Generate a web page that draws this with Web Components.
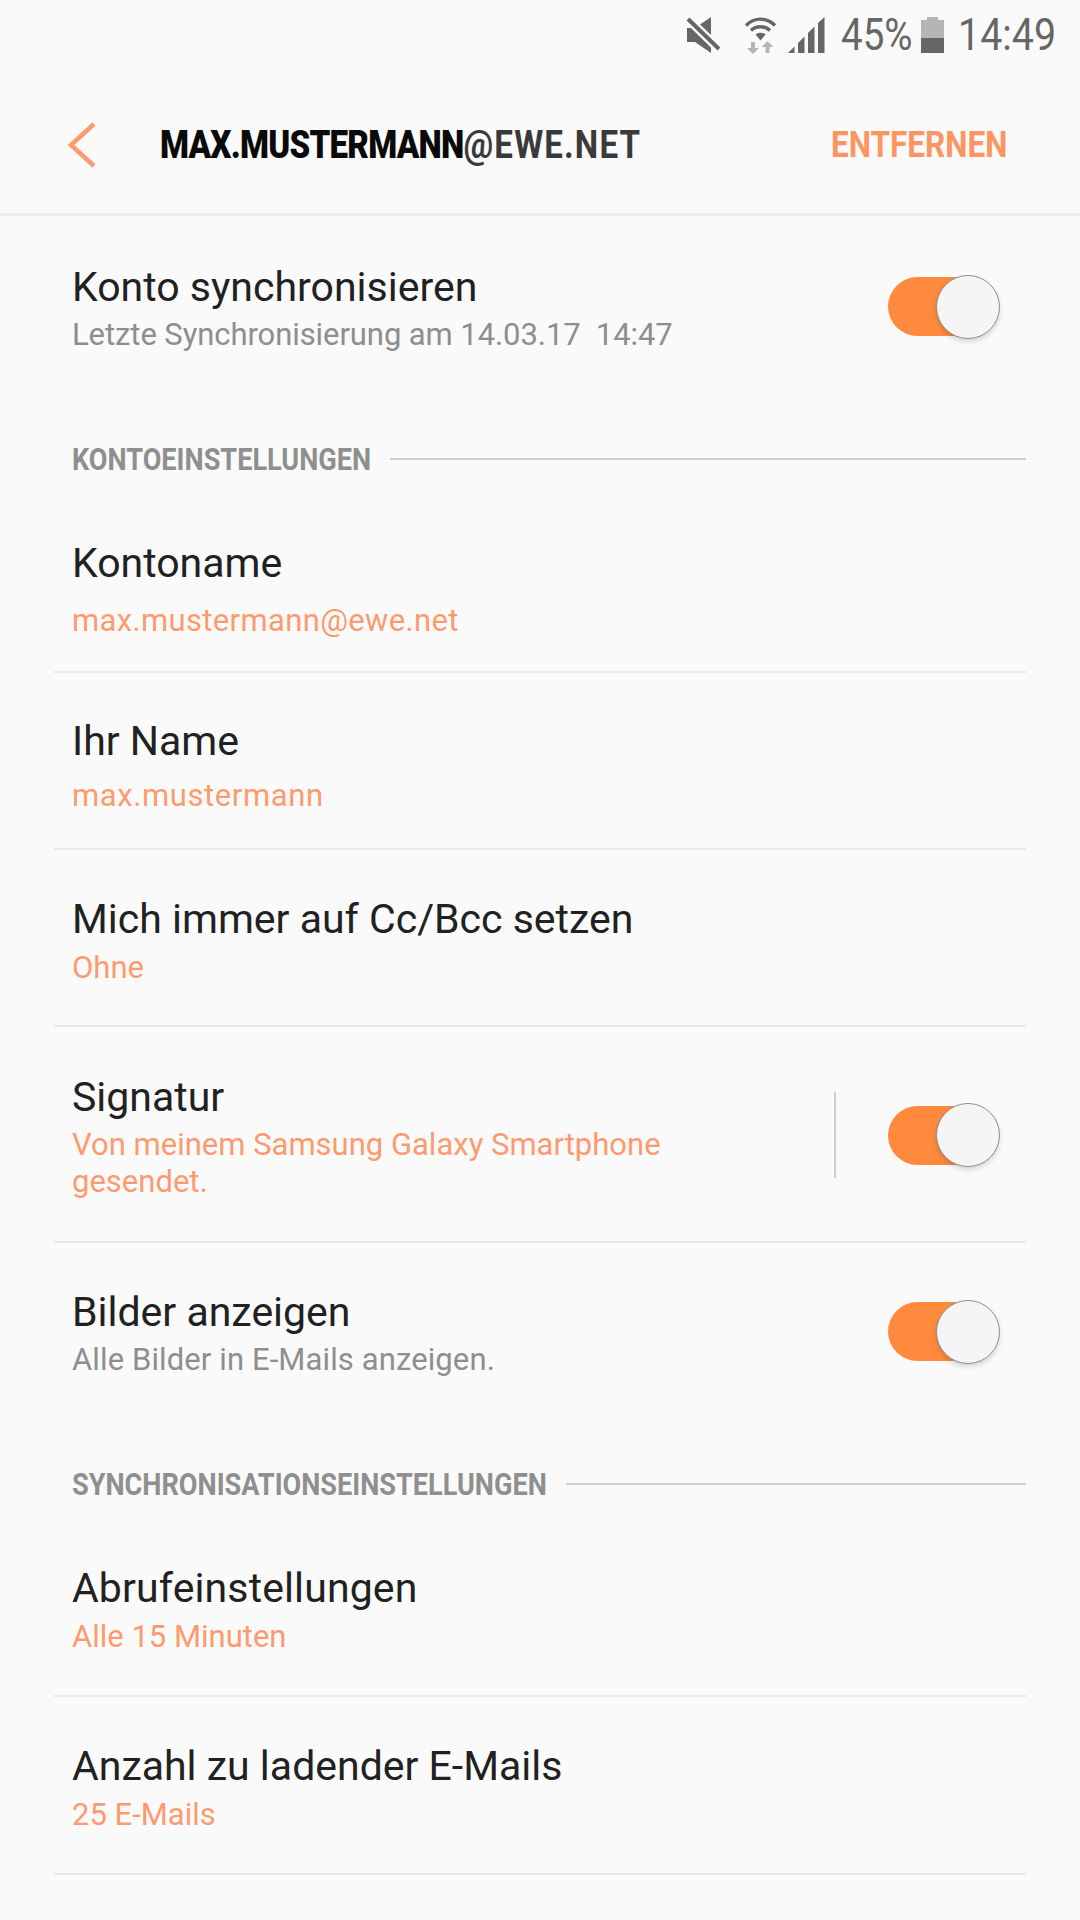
<!DOCTYPE html>
<html lang="de">
<head>
<meta charset="utf-8">
<title>Konto</title>
<style>
  html, body { margin: 0; padding: 0; background: #fafafa; }
  body { width: 1080px; height: 1920px; overflow: hidden; font-family: Roboto, sans-serif; }
</style>
</head>
<body>
<status-bar></status-bar>
<account-header action="ENTFERNEN"><b>MAX.MUSTERMANN</b><i>@EWE.NET</i></account-header>
<settings-list>
  <setting-row top="48" gap="6" toggle style="--sub-color:#8e8e8e;--sub-ls:-.08px">
    <span slot="title">Konto synchronisieren</span>
    Letzte Synchronisierung am 14.03.17&nbsp; 14:47
  </setting-row>
  <section-head style="--head-top:48px">KONTOEINSTELLUNGEN</section-head>
  <setting-row top="64" gap="16" bottom="32" style="--sub-ls:.35px" divider>
    <span slot="title">Kontoname</span>
    max.mustermann@ewe.net
  </setting-row>
  <setting-row top="45" gap="13" bottom="34" style="--sub-ls:.6px" divider>
    <span slot="title">Ihr Name</span>
    max.mustermann
  </setting-row>
  <setting-row top="46" gap="7" bottom="39" divider>
    <span slot="title">Mich immer auf Cc/Bcc setzen</span>
    Ohne
  </setting-row>
  <setting-row top="47" gap="6" divider toggle separator>
    <span slot="title">Signatur</span>
    Von meinem Samsung Galaxy Smartphone<br>gesendet.
  </setting-row>
  <setting-row top="46" gap="6" toggle style="--sub-color:#8e8e8e;--sub-ls:.11px">
    <span slot="title">Bilder anzeigen</span>
    Alle Bilder in E-Mails anzeigen.
  </setting-row>
  <section-head style="--head-top:48px">SYNCHRONISATIONSEINSTELLUNGEN</section-head>
  <setting-row top="64" gap="7" bottom="40" divider style="--title-ls:.12px">
    <span slot="title">Abrufeinstellungen</span>
    Alle 15 Minuten
  </setting-row>
  <setting-row top="46" gap="7" bottom="40" divider>
    <span slot="title">Anzahl zu ladender E-Mails</span>
    25 E-Mails
  </setting-row>
</settings-list>

<script>
// Status bar
class StatusBar extends HTMLElement {
  constructor() {
    super();
    this.attachShadow({mode: 'open'});
    this.shadowRoot.innerHTML = `
    <style>
      :host { display: flex; height: 70px; align-items: flex-start; justify-content: flex-end; padding: 16px 26px 0 0; box-sizing: border-box; color: #666; }
      svg { display: block; flex: none; }
      .txt { display: block; height: 38px; line-height: 38px; font-size: 44px; flex: none; white-space: nowrap; }
      .txt span { display: inline-block; transform-origin: left center; }
      .mute { margin-right: 21px; }
      .wifi { margin-right: 10px; }
      .signal { margin-right: 15px; }
      .pct { width: 80px; }
      .pct span { transform: scaleX(.875); }
      .time { width: 96px; }
      .time span { transform: scaleX(.895); }
      .bat { margin-right: 14px; }
    </style>
    <svg class="mute" width="37" height="38" viewBox="0 0 37 38">
      <path d="M1 12H9L25 1V37L9 26H1Z" fill="#666"/>
      <path d="M2 3L33 33" stroke="#fafafa" stroke-width="9"/>
      <path d="M2 3L33 33" stroke="#666" stroke-width="4"/>
    </svg>
    <svg class="wifi" width="34" height="38" viewBox="0 0 34 38" fill="none">
      <path d="M2 9.5C10 1 23 1 31 9.5" stroke="#666" stroke-width="3.4"/>
      <path d="M7 14.5C12 9.5 21 9.5 26 14.5" stroke="#666" stroke-width="3.4"/>
      <path d="M11.5 18.5L16.5 24.5L21.5 18.5C18.5 16 14.5 16 11.5 18.5Z" fill="#666"/>
      <path d="M7 26H11V32H15L9 38L3 32H7Z" fill="#b5b5b5"/>
      <path d="M21.5 37H25.5V31H29.5L23.5 25L17.5 31H21.5Z" fill="#b5b5b5"/>
    </svg>
    <svg class="signal" width="38" height="38" viewBox="0 0 38 38" fill="#666">
      <path d="M0 37L6.5 30.5V37Z"/>
      <path d="M10 37V27L16.5 20.5V37Z"/>
      <path d="M20 37V17L26.5 10.5V37Z"/>
      <path d="M30 37V7L36.5 1V37Z"/>
    </svg>
    <div class="txt pct"><span>45%</span></div>
    <svg class="bat" width="23" height="37" viewBox="0 0 23 37">
      <path d="M6 1H17V4H23V22H0V4H6Z" fill="#b5b5b5"/>
      <rect x="0" y="22" width="23" height="15" fill="#666"/>
    </svg>
    <div class="txt time"><span>14:49</span></div>`;
  }
}

// Title bar with back arrow and action
class AccountHeader extends HTMLElement {
  constructor() {
    super();
    this.attachShadow({mode: 'open'});
    this.shadowRoot.innerHTML = `
    <style>
      :host { display: flex; align-items: center; height: 146px; box-sizing: border-box; padding: 7px 0 0 67px; border-bottom: 3px solid #ececec; }
      svg { display: block; flex: none; margin-right: 63px; }
      .title, .action { font-weight: 700; white-space: nowrap; display: inline-block; transform-origin: left center; }
      .title { font-size: 39px; color: #3a3a3a; width: 520px; transform: scaleX(.85); }
      ::slotted(b) { color: #0a0a0a; letter-spacing: -.93px; }
      ::slotted(i) { font-style: normal; letter-spacing: 1.35px; }
      .action { font-size: 36px; color: #fd9563; transform: scaleX(.875); margin-left: 151px; }
    </style>
    <svg width="30" height="48" viewBox="0 0 30 48" fill="none">
      <path d="M27 3L4 24L27 45" stroke="#fd9a6f" stroke-width="4.5"/>
    </svg>
    <div class="title"><slot></slot></div>
    <div class="action">${this.getAttribute('action')}</div>`;
  }
}

class SettingsList extends HTMLElement {
  constructor() {
    super();
    this.attachShadow({mode: 'open'});
    this.shadowRoot.innerHTML = `
    <style>
      :host { display: block; margin: 0 54px; }
    </style>
    <slot></slot>`;
  }
}

class SectionHead extends HTMLElement {
  constructor() {
    super();
    this.attachShadow({mode: 'open'});
    this.shadowRoot.innerHTML = `
    <style>
      :host { display: flex; align-items: center; padding: var(--head-top, 0) 0 0 18px; height: 34px; }
      .t { display: inline-block; font-size: 32px; font-weight: 700; color: #8f8f8f; white-space: nowrap; transform-origin: left center; transform: scaleX(.847); }
      .w { flex: none; }
      .line { flex: 1; height: 2px; background: #cfcfcf; margin-left: 19px; }
    </style>
    <div class="w"><div class="t"><slot></slot></div></div>
    <div class="line"></div>`;
  }
  connectedCallback() {
    // scaled text keeps its old width, so set the wrapper to the scaled one
    const w = this.shadowRoot.querySelector('.w');
    const t = this.shadowRoot.querySelector('.t');
    w.style.width = (t.getBoundingClientRect().width) + 'px';
  }
}

class ToggleSwitch extends HTMLElement {
  constructor() {
    super();
    this.attachShadow({mode: 'open'});
    this.shadowRoot.innerHTML = `
    <style>
      :host { display: block; position: relative; width: 112px; height: 63px; flex: none; }
      .track { position: absolute; left: 0; top: 2px; width: 100px; height: 59px; border-radius: 30px; background: #ff8a3d; }
      .thumb { position: absolute; right: 0; top: -.5px; width: 64px; height: 64px; box-sizing: border-box; border-radius: 50%; background: #f5f5f5; border: 1.5px solid #8f8f8f; box-shadow: 0 3px 5px rgba(0,0,0,.14); }
    </style>
    <div class="track"></div><div class="thumb"></div>`;
  }
}

// One row: title, coloured value line, optional toggle
class SettingRow extends HTMLElement {
  constructor() {
    super();
    const top = this.getAttribute('top') || 45;
    const gap = this.getAttribute('gap') || 8;
    const bottom = this.getAttribute('bottom') || 41;
    const toggle = this.hasAttribute('toggle');
    const sep = this.hasAttribute('separator');
    this.attachShadow({mode: 'open'});
    this.shadowRoot.innerHTML = `
    <style>
      :host { display: flex; align-items: center; padding: ${top}px 26px ${bottom}px 18px; position: relative; }
      :host([divider]) { border-bottom: 2px solid #e8e8e8; }
      .text { flex: 1; min-width: 0; }
      .title { font-size: 41px; line-height: 46px; letter-spacing: var(--title-ls, 0); color: #212121; }
      .sub { font-size: 31px; line-height: 37px; margin-top: ${gap}px; letter-spacing: var(--sub-ls, 0); color: var(--sub-color, #fd9a6f); }
      .sep { width: 2px; height: 86px; background: #cfcfcf; margin: -4px 52px 0 0; flex: none; }
      toggle-switch { margin-top: -4px; }
    </style>
    <div class="text">
      <div class="title"><slot name="title"></slot></div>
      <div class="sub"><slot></slot></div>
    </div>
    ${sep ? '<div class="sep"></div>' : ''}
    ${toggle ? '<toggle-switch></toggle-switch>' : ''}`;
  }
}

customElements.define('toggle-switch', ToggleSwitch);
customElements.define('status-bar', StatusBar);
customElements.define('account-header', AccountHeader);
customElements.define('settings-list', SettingsList);
customElements.define('section-head', SectionHead);
customElements.define('setting-row', SettingRow);
</script>
</body>
</html>
